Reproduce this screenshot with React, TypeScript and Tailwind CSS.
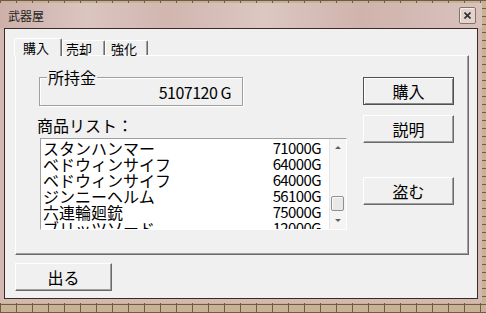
const JP = "font-['Noto_Sans_CJK_JP','Noto_Sans',sans-serif]";

const ITEMS = [
  { name: "スタンハンマー", price: "71000G" },
  { name: "ベドウィンサイフ", price: "64000G" },
  { name: "ベドウィンサイフ", price: "64000G" },
  { name: "ジンニーヘルム", price: "56100G" },
  { name: "六連輪廻銃", price: "75000G" },
  { name: "ブリッツソード", price: "12000G" },
];

function Btn({ label, primary = false, className = "" }: { label: string; primary?: boolean; className?: string }) {
  const look = primary
    ? "border border-[#505050] shadow-[inset_1px_1px_0_#fff,inset_-1px_-1px_0_#8a8a8a]"
    : "border border-t-white border-l-white border-r-[#6a6a6a] border-b-[#6a6a6a] shadow-[inset_-1px_-1px_0_#a0a0a0]";
  return (
    <button
      className={`flex h-[28px] w-[91px] items-center justify-center bg-[#f0f0f0] text-[16px] leading-none text-black ${look} ${className}`}
    >
      {label}
    </button>
  );
}

function Tab({ label, active = false, className = "" }: { label: string; active?: boolean; className?: string }) {
  return (
    <div
      className={`flex items-center rounded-t-[2px] border-l border-t border-r border-l-white border-t-white border-r-[#6a6a6a] bg-[#f0f0f0] text-[13px] leading-none text-black shadow-[inset_-1px_0_0_#a0a0a0] ${
        active ? "relative z-10 -mb-px h-[18px]" : "h-[15px]"
      } ${className}`}
    >
      {label}
    </div>
  );
}

function Arrow({ up }: { up: boolean }) {
  return (
    <div className="flex h-[17px] items-center justify-center">
      {up ? (
        <div className="h-0 w-0 border-x-[3px] border-b-[3px] border-x-transparent border-b-[#606060]" />
      ) : (
        <div className="h-0 w-0 border-x-[3px] border-t-[3px] border-x-transparent border-t-[#606060]" />
      )}
    </div>
  );
}

export default function App() {
  return (
    <div
      className={`h-[313px] w-[486px] overflow-hidden bg-[#c7b394] pt-[3px] ${JP} [background-image:linear-gradient(#6e5c48_1px,transparent_1px),linear-gradient(90deg,#6e5c48_1px,transparent_1px)] [background-size:16px_8px,16px_8px]`}
    >
      <div className="flex h-[300px] w-[482px] flex-col bg-[#d3b7b1]">
        {/* title bar */}
        <div className="flex h-[25px] items-center justify-between pl-[8px] pr-[6px] [background-image:linear-gradient(90deg,#cdb0aa_0%,#dbc5bf_18%,#d2b6b0_35%,#dcc7c1_55%,#d0b3ad_75%,#d9c2bc_100%)]">
          <span className="text-[12px] leading-none text-[#1e1e1e]">武器屋</span>
          <div className="flex h-[17px] w-[17px] items-center justify-center rounded-[2px] border border-[#8a706b] bg-[#e3d3ce] shadow-[inset_1px_1px_0_#f6eeec]">
            <svg width="7" height="7" viewBox="0 0 7 7">
              <path d="M0.5 0.5L6.5 6.5M6.5 0.5L0.5 6.5" stroke="#303030" strokeWidth="1.6" />
            </svg>
          </div>
        </div>

        {/* body */}
        <div className="px-[4px] pb-[4px]">
          <div className="h-[271px] border border-[#3a2b29] bg-[#f0f0f0] pl-[10px] pt-[9px]">
            {/* tabs */}
            <div className="-ml-px flex h-[17px] items-end">
              <Tab label="購入" active className="w-[48px] pl-[8px]" />
              <Tab label="売却" className="w-[43px] pl-[3px]" />
              <Tab label="強化" className="w-[43px] pl-[5px]" />
            </div>

            {/* tab page */}
            <div className="flex h-[200px] w-[454px] border border-t-white border-l-white border-r-[#6a6a6a] border-b-[#6a6a6a] shadow-[inset_-1px_-1px_0_#a0a0a0]">
              <div className="flex w-[331px] flex-col">
                <div className="relative ml-[23px] mt-[21px] flex h-[29px] w-[204px] items-center justify-end border border-[#a0a0a0] pr-[11px] text-[16px] leading-none shadow-[1px_1px_0_#fff,inset_1px_1px_0_#fff]">
                  <span className="absolute -top-[10px] left-[7px] bg-[#f0f0f0] px-px text-[16px] leading-[18px]">所持金</span>
                  <span className="tracking-[-0.5px]">5107120 G</span>
                </div>
                <div className="ml-[21px] mt-[10px] h-[18px] text-[16px] leading-[18px]">商品リスト：</div>
                <div className="ml-[24px] mt-[4px] flex h-[92px] w-[307px] border border-t-[#a0a0a0] border-l-[#a0a0a0] border-r-white border-b-white shadow-[inset_1px_1px_0_#6a6a6a]">
                  <div className="flex-1 overflow-hidden bg-white pl-[2px] pr-[8px] pt-px">
                    {ITEMS.map((it, i) => (
                      <div key={i} className="flex h-[16px] items-center justify-between text-[16px] leading-[16px] text-black">
                        <span>{it.name}</span>
                        <span className="text-[15px] tracking-[-0.6px]">{it.price}</span>
                      </div>
                    ))}
                  </div>
                  <div className="flex w-[17px] flex-col bg-[#f4f4f4] shadow-[inset_1px_0_0_#e6e6e6]">
                    <Arrow up />
                    <div className="flex flex-1 flex-col justify-end">
                      <div className="mx-[2px] mb-px h-[15px] rounded-[2px] border border-[#909090] bg-[#e8e8e8] shadow-[inset_1px_1px_0_#fafafa]" />
                    </div>
                    <Arrow up={false} />
                  </div>
                </div>
              </div>
              <div className="ml-[16px] flex flex-col">
                <Btn label="購入" primary className="mt-[21px]" />
                <Btn label="説明" className="mt-[10px]" />
                <Btn label="盗む" className="mt-[34px]" />
              </div>
            </div>

            <Btn label="出る" className="mt-[8px] w-[97px]" />
          </div>
        </div>
      </div>
    </div>
  );
}
